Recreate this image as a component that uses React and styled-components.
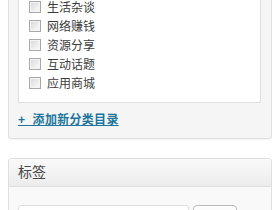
import styled, { createGlobalStyle } from 'styled-components'

const GlobalStyle = createGlobalStyle`
  html, body {
    margin: 0;
    padding: 0;
    background: #fff;
  }
  body {
    font-family: "Liberation Sans", "Noto Sans CJK SC", sans-serif;
    font-size: 12px;
    color: #333;
    overflow: hidden;
  }
`

const categories = ['未分类', '生活杂谈', '网络赚钱', '资源分享', '互动话题', '应用商城']

const App = () => {
  return (
    <>
      <GlobalStyle />
      <Page>
        <Postbox style={{ marginTop: -44 }}>
          <Inside>
            <ChecklistPanel>
              {categories.map((name) => (
                <Row key={name}>
                  <Checkbox />
                  <span>{name}</span>
                </Row>
              ))}
            </ChecklistPanel>
            <AddLink href='#'>{'+\u00a0\u00a0添加新分类目录'}</AddLink>
          </Inside>
        </Postbox>

        <Postbox>
          <BoxHeader>标签</BoxHeader>
          <TagBody>
            <TagInput type='text' />
            <TagButton type='button'>添加</TagButton>
          </TagBody>
        </Postbox>
      </Page>
    </>
  )
}

export default App

const Page = styled.div`
  display: flex;
  flex-direction: column;
  gap: 19px;
  padding: 0 8px;
`

const Postbox = styled.div`
  border: 1px solid #dfdfdf;
  border-radius: 3px;
  background-color: #f5f5f5;
  box-shadow: inset 0 1px 0 #fff, 0 1px 1px rgba(0, 0, 0, 0.04);
  overflow: hidden;
`

const Inside = styled.div`
  display: flex;
  flex-direction: column;
  align-items: flex-start;
  padding: 10px 10px 9px 9px;
`

const ChecklistPanel = styled.div`
  align-self: stretch;
  border: 1px solid #dfdfdf;
  background-color: #fff;
  padding: 10px;
`

const Row = styled.label`
  display: flex;
  align-items: center;
  height: 19px;
  font-size: 12px;
  color: #3c3c3c;
`

const Checkbox = styled.span`
  box-sizing: border-box;
  width: 12px;
  height: 12px;
  margin-right: 6px;
  border: 1px solid #a8a8a8;
  background: linear-gradient(135deg, #d6d6d6 0%, #f2f2f2 70%, #fafafa 100%);
  box-shadow: inset 0 0 0 1px #f4f4f4;
`

const AddLink = styled.a`
  margin-top: 8px;
  line-height: 18px;
  font-size: 12px;
  font-weight: bold;
  letter-spacing: 0.3px;
  color: #21759b;
  text-decoration: underline;
`

const BoxHeader = styled.h3`
  margin: 0;
  height: 27px;
  line-height: 27px;
  padding: 0 9px;
  font-size: 14px;
  font-weight: normal;
  color: #464646;
  background: linear-gradient(to bottom, #f9f9f9, #ececec);
  border-bottom: 1px solid #dfdfdf;
`

const TagBody = styled.div`
  display: flex;
  gap: 4px;
  padding: 18px 9px 10px;
  background-color: #f9f9f9;
`

const TagInput = styled.input`
  box-sizing: border-box;
  width: 171px;
  height: 24px;
  margin: 0;
  border: 1px solid #dfdfdf;
  border-radius: 3px;
  background: #fff;
`

const TagButton = styled.button`
  box-sizing: border-box;
  width: 44px;
  height: 24px;
  margin: 0;
  border: 1px solid #bbb;
  border-radius: 4px;
  background: linear-gradient(to bottom, #fefefe, #f4f4f4);
  font-family: "Liberation Sans", "Noto Sans CJK SC", sans-serif;
  font-size: 12px;
  color: #464646;
`
